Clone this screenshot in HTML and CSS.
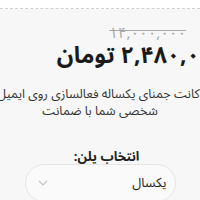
FILE: index.html
```html
<!DOCTYPE html>
<html lang="fa">
<head>
<meta charset="utf-8">
<link rel="stylesheet" href="styles.css">
</head>
<body>
<div class="top"></div>
<main class="card" dir="rtl">
  <div class="prices">
    <div class="old-row"><span class="old">۱۴,۰۰۰,۰۰۰</span></div>
    <div class="now">۲,۴۸۰,۰۰۰ تومان</div>
  </div>
  <p class="desc">
    <span class="line">اکانت جمنای یکساله فعالسازی روی ایمیل</span>
    <span class="line">شخصی شما با ضمانت</span>
  </p>
  <div class="plan">
    <div class="plan-label">انتخاب پلن:</div>
    <div class="select">
      <span class="value">یکسال</span>
      <svg class="chev" width="10" height="6" viewBox="0 0 10 6"><path d="M1 1l4 4 4-4" fill="none" stroke="#c4c4c4" stroke-width="1.2"/></svg>
    </div>
  </div>
</main>
</body>
</html>
```
FILE: styles.css
```css
html, body {
  margin: 0;
  padding: 0;
}
body {
  width: 200px;
  height: 200px;
  overflow: hidden;
  background: #f7f7f7;
  font-family: "Noto Sans Arabic", "DejaVu Sans", sans-serif;
  color: #222;
}
.top {
  height: 8px;
  background: #fff;
  border-bottom: 1px dashed #cfcfcf;
}
.card {
  width: 200px;
  display: flex;
  flex-direction: column;
}
.prices {
  display: flex;
  flex-direction: column;
  align-items: flex-start;
  margin-right: -26px;
  padding-top: 18px;
}
.old-row {
  padding-right: 40px;
  height: 12px;
  display: flex;
  align-items: center;
}
.old {
  font-size: 15px;
  line-height: 12px;
  color: #a8a8a8;
  text-decoration: line-through;
  white-space: nowrap;
}
.now {
  font-size: 23px;
  line-height: 18px;
  margin-top: 8px;
  font-weight: bold;
  color: #1a1a1a;
  white-space: nowrap;
}
.desc {
  margin: 21px 0 0;
  display: flex;
  flex-direction: column;
  align-items: center;
  font-size: 12.5px;
  line-height: 17px;
  color: #333;
}
.line {
  white-space: nowrap;
}
.plan {
  margin-top: 30px;
  display: flex;
  flex-direction: column;
  align-items: center;
}
.plan-label {
  font-size: 13px;
  line-height: 14px;
  font-weight: bold;
  color: #222;
  margin-right: -13px;
}
.select {
  box-sizing: border-box;
  width: 151px;
  height: 38px;
  border: 1px solid #e6e6e6;
  border-radius: 19px;
  background: #fafafa;
  display: flex;
  align-items: center;
  justify-content: space-between;
  padding: 0 8px 0 12px;
}
.value {
  font-size: 13px;
  color: #222;
}
.chev {
  display: block;
}
```
